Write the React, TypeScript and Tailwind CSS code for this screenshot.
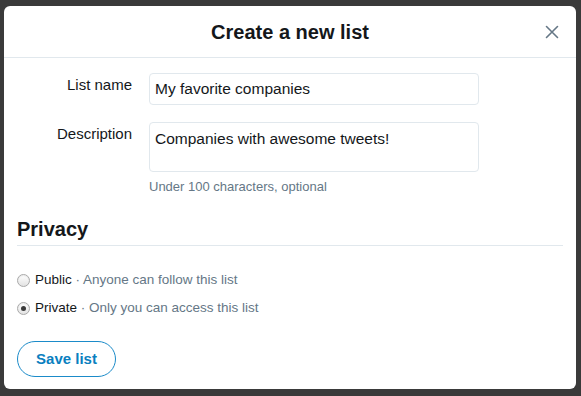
import React from "react";

function Radio({ checked }: { checked?: boolean }) {
  return (
    <span className="w-[13px] h-[13px] rounded-full border border-[#a9a9a9] bg-gradient-to-b from-[#ffffff] to-[#e3e3e3] flex items-center justify-center shrink-0 shadow-[inset_0_1px_1px_rgba(0,0,0,0.08)]">
      {checked && <span className="w-[5px] h-[5px] rounded-full bg-[#3a3a3a]" />}
    </span>
  );
}

export default function App() {
  return (
    <div
      className="w-[581px] h-[396px] overflow-hidden bg-[#3a3a3a] pt-[6px] pl-[4px]"
      style={{ fontFamily: '"Liberation Sans", Arial, sans-serif' }}
    >
      <div className="w-[572px] h-[383px] bg-white rounded-[6px] flex flex-col text-[#14171a]">
        <div className="h-[52px] border-b border-[#e1e8ed] flex items-center justify-center relative">
          <h1 className="text-[20px] font-bold leading-none">Create a new list</h1>
          <button className="absolute right-[15px] top-[17px] text-[#657786]">
            <svg width="18" height="18" viewBox="0 0 18 18" fill="none" stroke="currentColor" strokeWidth="1.6" strokeLinecap="round">
              <path d="M3.5 3.5 L14.5 14.5 M14.5 3.5 L3.5 14.5" />
            </svg>
          </button>
        </div>
        <div className="px-[13px] pt-[15px]">
          <div className="flex">
            <div className="w-[115px] text-right text-[15px] pt-[3px] leading-[18px]">List name</div>
            <div className="ml-[17px] w-[330px] h-[32px] border border-[#e1e8ed] rounded-[4px] px-[5px] flex items-center text-[15.5px]">
              My favorite companies
            </div>
          </div>
          <div className="flex mt-[17px]">
            <div className="w-[115px] text-right text-[15px] pt-[3px] leading-[18px]">Description</div>
            <div className="ml-[17px] w-[330px]">
              <div className="h-[50px] border border-[#e1e8ed] rounded-[4px] px-[5px] pt-[7px] text-[15.5px] leading-[18px]">
                Companies with awesome tweets!
              </div>
              <div className="text-[13px] text-[#657786] mt-[7px] leading-[16px]">Under 100 characters, optional</div>
            </div>
          </div>
          <div className="mt-[23px] border-b border-[#e1e8ed] pb-[5px]">
            <h2 className="text-[20px] font-bold leading-[22px]">Privacy</h2>
          </div>
          <div className="mt-[26px] flex items-center gap-[5px] text-[13.5px] leading-[16px]">
            <Radio />
            <span>
              Public <span className="text-[#657786]">· Anyone can follow this list</span>
            </span>
          </div>
          <div className="mt-[12px] flex items-center gap-[5px] text-[13.5px] leading-[16px]">
            <Radio checked />
            <span>
              Private <span className="text-[#657786]">· Only you can access this list</span>
            </span>
          </div>
          <button className="mt-[25px] w-[99px] h-[36px] rounded-full border border-[#1b8bc9] text-[#0a7fbf] font-bold text-[15px] flex items-center justify-center">
            Save list
          </button>
        </div>
      </div>
    </div>
  );
}
